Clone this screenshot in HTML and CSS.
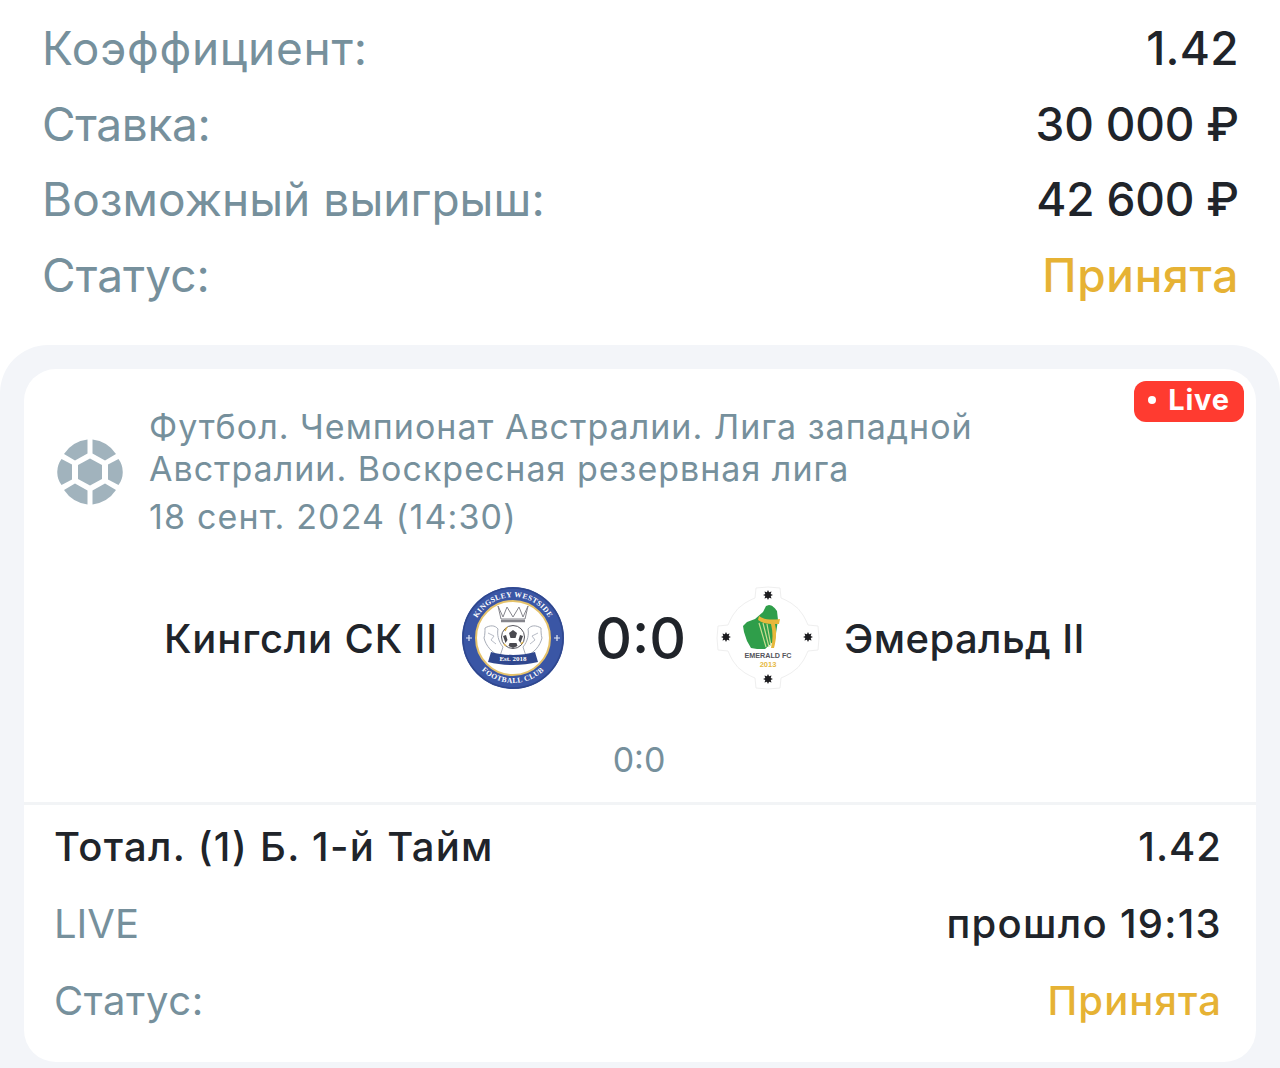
FILE: index.html
```html
<!DOCTYPE html>
<html lang="ru">
<head>
<meta charset="utf-8">
<title>Ставка</title>
<link rel="stylesheet" href="styles.css">
</head>
<body>
<section class="summary">
  <div class="sum-row"><span class="label label-wide">Коэффициент:</span><span class="value">1.42</span></div>
  <div class="sum-row"><span class="label label-tight">Ставка:</span><span class="value money">30 000 ₽</span></div>
  <div class="sum-row"><span class="label">Возможный выигрыш:</span><span class="value money">42 600 ₽</span></div>
  <div class="sum-row"><span class="label">Статус:</span><span class="value accepted">Принята</span></div>
</section>
<section class="outer">
  <div class="card">
    <span class="live"><i class="live-dot"></i>Live</span>
    <header class="league">
      <svg class="ball" viewBox="0 0 66 66" aria-hidden="true">
        <path class="ball-f" d="M33 19.500 45 26V40L33 46.500 21 40V26z"/>
        <path class="ball-f" d="M30.500 .6V14.500L18 21.500 7 15A33 33 0 0 1 30.500 .6z"/>
        <path class="ball-f" d="M35.500 .6A33 33 0 0 1 59 15L48 21.500 35.500 14.500z"/>
        <path class="ball-f" d="M4.500 20 15 25.500V40.500L4.500 46A22 22 0 0 1 4.500 20z"/>
        <path class="ball-f" d="M61.500 20A22 22 0 0 1 61.500 46L51 40.500V25.500z"/>
        <path class="ball-f" d="M7 51 18 44.500 30.500 51.500V65.400A33 33 0 0 1 7 51z"/>
        <path class="ball-f" d="M59 51A33 33 0 0 1 35.500 65.400V51.500L48 44.500z"/>
      </svg>
      <div class="league-text">
        <div class="league-name">Футбол. Чемпионат Австралии. Лига западной<br>Австралии. Воскресная резервная лига</div>
        <div class="league-date">18 сент. 2024 (14:30)</div>
      </div>
    </header>
    <div class="match">
      <span class="team team-home">Кингсли СК II</span>
      <svg class="crest" viewBox="0 0 104 104" aria-hidden="true">
        <circle cx="52" cy="52" r="51" fill="#3a56a5"/>
        <circle cx="52" cy="52" r="50" fill="none" stroke="#2f478e" stroke-width="1.500"/>
        <circle cx="52" cy="52" r="37" fill="#fff" stroke="#e5c26a" stroke-width="2"/>
        <path id="arcTop" fill="none" d="M11 52a41 41 0 0 1 82 0"/>
        <path id="arcBot" fill="none" d="M7 52a45 45 0 0 0 90 0"/>
        <text class="crest-t"><textPath href="#arcTop" startOffset="50%" text-anchor="middle">KINGSLEY WESTSIDE</textPath></text>
        <text class="crest-t"><textPath href="#arcBot" startOffset="50%" text-anchor="middle">FOOTBALL CLUB</textPath></text>
        <path d="M5 52h6M8 49v6M93 52h6M96 49v6" stroke="#dfe6f5" stroke-width="1.200"/>
        <path d="M37 20l5 11 4-10 6 10 6-10 4 10 5-11-3 13H40z" fill="#fff" stroke="#85858c" stroke-width="1"/>
        <path d="M40 35h24" stroke="#85858c" stroke-width="2.500"/>
        <path d="M24 42c5-3 10-3 13 1-1 5 0 12 5 18l-3 9c-8-3-14-10-16-18 1-3 1-7 1-10zM80 42c-5-3-10-3-13 1 1 5 0 12-5 18l3 9c8-3 14-10 16-18-1-3-1-7-1-10z" fill="#fff" stroke="#a8adb8" stroke-width="1"/>
        <path d="M27 47l6 3-3 4 5 4M77 47l-6 3 3 4-5 4" fill="none" stroke="#b8bcc6" stroke-width="1"/>
        <circle cx="52" cy="51" r="11.500" fill="#fff" stroke="#55555c" stroke-width="1"/>
        <path d="M52 44l4 3-1.500 5h-5L48 47zM42 50l3-1 1.500 5-2 3zM62 50l-3-1-1.500 5 2 3zM48.500 57h7l1 3-4.500 2-4.500-2z" fill="#4a4a50"/>
        <path d="M44 45l2-4M60 58l2-2M43 58l2 2" stroke="#d8ae4a" stroke-width="1.500"/>
        <path d="M30 66c14 4 30 4 44 0l3 10c-16 4-34 4-50 0z" fill="#2f478e"/>
        <text class="crest-est" x="52" y="75" text-anchor="middle">Est. 2018</text>
      </svg>
      <span class="score">0:0</span>
      <svg class="crest" viewBox="0 0 104 104" aria-hidden="true">
        <defs>
          <path id="emStar" d="M0-5 1.100-2.700 3.500-3.500 2.700-1.100 5 0 2.700 1.100 3.500 3.500 1.100 2.700 0 5-1.100 2.700-3.500 3.500-2.700 1.100-5 0-2.700-1.100-3.500-3.500-1.100-2.700z"/>
        </defs>
        <path d="M40 2q12-2 24 0l1 10q3 1 10 5 8 5 12 12 3 5 5 10l10 1q2 12 0 24l-10 1q-2 5-5 10-4 7-12 12-7 4-10 5l-1 10q-12 2-24 0l-1-10q-3-1-10-5-8-5-12-12-3-5-5-10L2 64q-2-12 0-24l10-1q2-5 5-10 4-7 12-12 7-4 10-5z" fill="#fff" stroke="#efefef" stroke-width="1"/>
        <use class="em-star" href="#emStar" x="52" y="9"/>
        <use class="em-star" href="#emStar" x="10" y="51"/>
        <use class="em-star" href="#emStar" x="92" y="51"/>
        <use class="em-star" href="#emStar" x="52" y="93"/>
        <path d="M53 19c3 0 6 3 8 6l1 9-3 20-10 9-8 0-6-1-4-7-3-9-1-6 4-4 8-3 8-7 3-6z" fill="#2f9e4a"/>
        <path d="M43 30c6 4 13 4 21 3l-1 5-4 0c2 8 1 16-1 24h-3c2-8 2-16 0-24-5 0-9-1-13-4z" fill="#e7b73b"/>
        <path d="M43 37l7 24M47 37l6 24M51 38l4 22" stroke="#c9dd8f" stroke-width="1.200"/>
        <text class="em-name" x="52" y="72" text-anchor="middle">EMERALD FC</text>
        <text class="em-year" x="52" y="81" text-anchor="middle">2013</text>
      </svg>
      <span class="team team-away">Эмеральд II</span>
    </div>
    <div class="subscore">0:0</div>
    <div class="bet">
      <div class="bet-row"><span class="bet-name">Тотал. (1) Б. 1-й Тайм</span><span class="bet-name bet-odds">1.42</span></div>
      <div class="bet-row"><span class="bet-muted">LIVE</span><span class="bet-time">прошло 19:13</span></div>
      <div class="bet-row"><span class="bet-muted bet-wide">Статус:</span><span class="bet-status">Принята</span></div>
    </div>
  </div>
</section>
</body>
</html>
```
FILE: styles.css
```css
* { box-sizing: border-box; }
html, body { margin: 0; padding: 0; background: #fff; }
body {
  width: 1280px;
  height: 1068px;
  overflow: hidden;
  font-family: Inter, "Noto Sans", sans-serif;
  color: #20242a;
}
.summary { padding: 11px 41px 0 42px; }
.sum-row {
  display: flex;
  justify-content: space-between;
  height: 75.500px;
  line-height: 75.500px;
  font-size: 46px;
}
.label { color: #76909c; letter-spacing: 0.05px; }
.label-wide { letter-spacing: 0.75px; }
.label-tight { letter-spacing: -0.35px; }
.value { color: #20242a; letter-spacing: 0.3px; font-weight: 450; }
.money { letter-spacing: -0.2px; }
.accepted { color: #e6b234; letter-spacing: 0.7px; font-weight: 500; }
.outer {
  margin-top: 32px;
  padding: 24px 24px 6px;
  height: 723px;
  background: #f3f5f9;
  border-radius: 48px 48px 0 0;
}
.card {
  position: relative;
  height: 693px;
  background: #fff;
  border-radius: 32px;
}
.live {
  position: absolute;
  top: 12px;
  right: 12px;
  width: 110px;
  height: 41px;
  display: flex;
  align-items: center;
  justify-content: center;
  gap: 12px;
  padding-bottom: 4px;
  background: #ff3b30;
  border-radius: 12px;
  color: #fff;
  font-size: 29px;
  font-weight: 700;
  letter-spacing: 0.8px;
}
.live-dot { width: 8px; height: 8px; border-radius: 50%; background: #fff; }
.league {
  display: flex;
  align-items: center;
  gap: 26px;
  padding: 37px 0 0 33px;
}
.ball { width: 66px; height: 66px; flex: none; }
.ball-f { fill: #a1b3bd; }
.league-name {
  font-size: 34px;
  line-height: 42px;
  letter-spacing: 1px;
  color: #76909c;
}
.league-date {
  margin-top: 6px;
  font-size: 34px;
  line-height: 42px;
  letter-spacing: 1.15px;
  color: #76909c;
}
.match {
  display: flex;
  align-items: center;
  margin-top: 48px;
  padding-left: 140px;
  height: 104px;
}
.team { font-size: 40px; font-weight: 500; color: #20242a; }
.team-home { margin-right: 23px; letter-spacing: 0.85px; }
.team-away { margin-left: 24px; letter-spacing: 0.4px; }
.crest { width: 104px; height: 104px; flex: none; }
.score { width: 151px; text-align: center; font-size: 57px; font-weight: 500; color: #20242a; }
.crest-t { font-family: "Liberation Serif", serif; font-size: 7.500px; font-weight: 700; fill: #fff; letter-spacing: 0.4px; }
.crest-est { font-family: "Liberation Serif", serif; font-size: 7px; font-weight: 700; fill: #fff; }
.em-star { fill: #1d1d20; }
.em-name { font-family: "Liberation Sans", sans-serif; font-size: 7.200px; font-weight: 700; fill: #55565c; }
.em-year { font-family: "Liberation Sans", sans-serif; font-size: 7.500px; font-weight: 700; fill: #e6b93f; }
.subscore {
  margin-top: 49px;
  text-align: center;
  font-size: 34px;
  line-height: 42px;
  color: #76909c;
  padding-right: 2px;
}
.bet {
  margin-top: 21px;
  border-top: 3px solid #f2f4f6;
  padding: 3px 34px 0 30px;
}
.bet-row {
  display: flex;
  justify-content: space-between;
  align-items: center;
  height: 77px;
  font-size: 40px;
}
.bet-name { color: #20242a; font-weight: 500; letter-spacing: 1.3px; }
.bet-odds { letter-spacing: 1px; }
.bet-muted { color: #76909c; }
.bet-wide { letter-spacing: 0.6px; }
.bet-time { color: #20242a; font-weight: 500; letter-spacing: 1.3px; }
.bet-status { color: #e6b234; font-weight: 500; letter-spacing: 1.1px; }
```
